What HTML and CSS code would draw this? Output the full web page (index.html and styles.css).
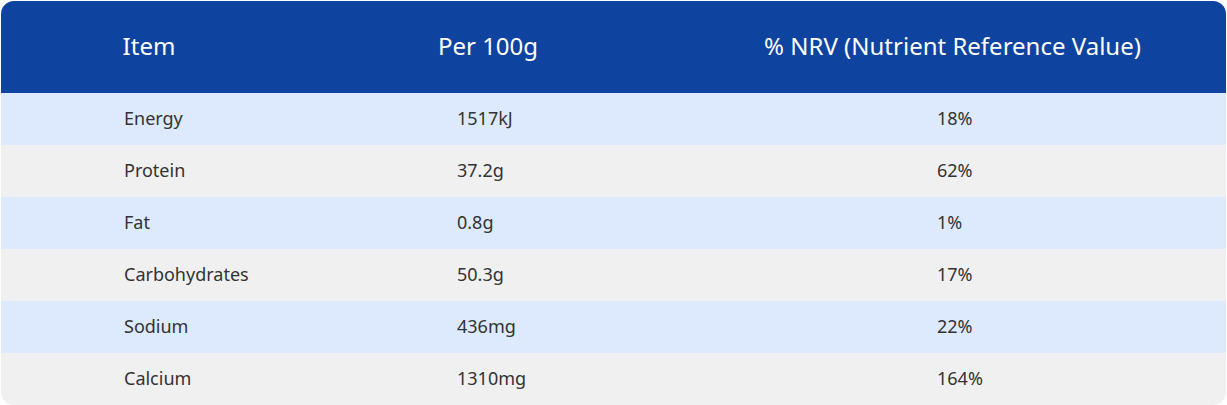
FILE: index.html
```html
<!DOCTYPE html>
<html lang="en">
<head>
<meta charset="utf-8">
<title>Nutrition Information</title>
<link rel="stylesheet" href="styles.css">
</head>
<body>
<div class="wrap">
  <table class="nutri">
    <colgroup>
      <col class="c1"><col class="c2"><col class="c3">
    </colgroup>
    <thead>
      <tr>
        <th>Item</th>
        <th>Per 100g</th>
        <th>% NRV (Nutrient Reference Value)</th>
      </tr>
    </thead>
    <tbody>
      <tr><td>Energy</td><td>1517kJ</td><td>18%</td></tr>
      <tr><td>Protein</td><td>37.2g</td><td>62%</td></tr>
      <tr><td>Fat</td><td>0.8g</td><td>1%</td></tr>
      <tr><td>Carbohydrates</td><td>50.3g</td><td>17%</td></tr>
      <tr><td>Sodium</td><td>436mg</td><td>22%</td></tr>
      <tr><td>Calcium</td><td>1310mg</td><td>164%</td></tr>
    </tbody>
  </table>
</div>
</body>
</html>
```

FILE: styles.css
```css
html, body {
  margin: 0;
  padding: 0;
  background: #ffffff;
}
body {
  font-family: "Noto Sans", "Open Sans", sans-serif;
}
.wrap {
  padding: 1px;
}
.nutri {
  width: 1225px;
  border-collapse: separate;
  border-spacing: 0;
  table-layout: fixed;
  border-radius: 13px;
  overflow: hidden;
}
.c1 { width: 296px; }
.c2 { width: 382px; }
.c3 { width: 547px; }
.nutri th {
  box-sizing: border-box;
  background: #0f43a0;
  color: #ffffff;
  font-weight: 400;
  font-size: 24px;
  line-height: 28px;
  height: 92px;
  padding: 0 0 2px;
  text-align: center;
  vertical-align: middle;
}
.nutri td {
  box-sizing: border-box;
  height: 52px;
  padding: 0 0 2px;
  font-size: 18px;
  line-height: 22px;
  color: #333333;
  vertical-align: middle;
  text-align: left;
}
.nutri td:nth-child(1) { padding-left: 123px; }
.nutri td:nth-child(2) { padding-left: 160px; }
.nutri td:nth-child(3) { padding-left: 258px; }
.nutri tbody tr:nth-child(odd) td { background: #dde9fd; }
.nutri tbody tr:nth-child(even) td { background: #f0f0f0; }
```
